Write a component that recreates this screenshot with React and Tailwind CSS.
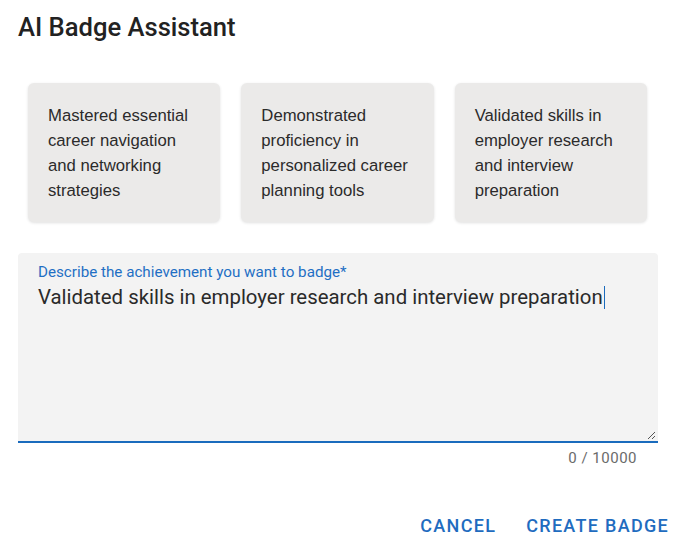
export default function App() {
  const cards = [
    "Mastered essential career navigation and networking strategies",
    "Demonstrated proficiency in personalized career planning tools",
    "Validated skills in employer research and interview preparation",
  ];
  return (
    <div className="w-[675px] h-[543px] bg-white overflow-hidden flex flex-col" style={{ fontFamily: "Roboto, sans-serif" }}>
      <div className="shrink-0 px-[18px] pt-[11px] h-[83px]">
        <h1 className="text-[25.6px] leading-[32px] font-medium text-[#222]">AI Badge Assistant</h1>
      </div>
      <div className="shrink-0 grid grid-cols-3 gap-[21px] px-[28px]">
        {cards.map((c) => (
          <div
            key={c}
            className="bg-[#ebeae9] rounded-[6px] px-[20px] py-[20px] h-[139px] text-[16.7px] leading-[25px] text-[#2b2b2b] shadow-[0_1px_3px_rgba(0,0,0,0.12)]"
            style={{ fontFamily: '"Liberation Sans", Arial, sans-serif' }}
          >
            {c}
          </div>
        ))}
      </div>
      <div className="shrink-0 mt-[31px] ml-[18px] mr-[17px] h-[190px] bg-[#f3f3f3] rounded-t-[4px] border-b-2 border-[#1a6bbd] relative px-[20px] pt-[11px]">
        <div className="text-[15.2px] leading-[17px] text-[#1f6fc4]">Describe the achievement you want to badge*</div>
        <div className="mt-[3px] text-[20.4px] leading-[26px] text-[#2a2a2a] flex items-center">
          <span>Validated skills in employer research and interview preparation</span>
          <span className="inline-block w-[1.5px] h-[23px] bg-[#1a6bbd] ml-[1px]"></span>
        </div>
        <svg className="absolute right-[2px] bottom-[1px]" width="10" height="10" viewBox="0 0 10 10">
          <line x1="9" y1="2" x2="2" y2="9" stroke="#555" strokeWidth="1" />
          <line x1="9" y1="6" x2="6" y2="9" stroke="#555" strokeWidth="1" />
        </svg>
      </div>
      <div className="shrink-0 mr-[38px] mt-[5px] text-right text-[15px] leading-[20px] text-[#6b6b6b] tracking-[0.5px]">0 / 10000</div>
      <div className="shrink-0 flex justify-end items-center gap-[14px] mt-[38px] mr-[-2px]">
        <button className="px-[8px] py-[6px] text-[18px] font-medium tracking-[1.3px] text-[#1f6cbf] uppercase">Cancel</button>
        <button className="px-[8px] py-[6px] text-[18px] font-medium tracking-[1.3px] text-[#1f6cbf] uppercase">Create Badge</button>
      </div>
    </div>
  );
}
